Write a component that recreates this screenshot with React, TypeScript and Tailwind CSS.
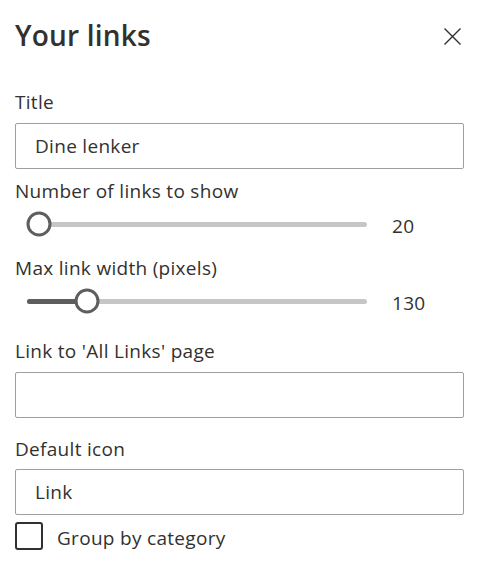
const font = { fontFamily: '"Open Sans", "Noto Sans", sans-serif' };

const Label = ({ children, className = "" }: { children: string; className?: string }) => (
  <div className={`text-[19px] leading-[24px] tracking-[0.3px] text-[#323130] ${className}`}>{children}</div>
);

const TextField = ({ value, className = "" }: { value: string; className?: string }) => (
  <div
    className={`h-[46px] w-[449px] rounded-[2px] border border-[#a19f9d] bg-white pl-[19px] flex items-center text-[19px] tracking-[0.3px] text-[#323130] ${className}`}
  >
    {value}
  </div>
);

const Slider = ({ percent, value, className = "" }: { percent: number; value: string; className?: string }) => (
  <div className={`flex items-center h-[32px] ${className}`}>
    <div className="relative ml-[12px] w-[340px] h-[32px] flex items-center">
      <div className="w-full h-[5px] rounded-full bg-[#c8c6c4]" />
      <div
        className="absolute left-0 h-[5px] rounded-l-full bg-[#605e5c]"
        style={{ width: `${percent}%` }}
      />
      <div
        className="absolute top-1/2 h-[25px] w-[25px] -translate-x-1/2 -translate-y-1/2 rounded-full border-[3px] border-[#605e5c] bg-white"
        style={{ left: `${percent}%` }}
      />
    </div>
    <div className="ml-[25px] pt-[4px] text-[19px] leading-[24px] tracking-[0.3px] text-[#323130]">{value}</div>
  </div>
);

export default function App() {
  return (
    <div className="w-[480px] h-[574px] bg-white px-[15px] pt-[15px]" style={font}>
      <div className="flex items-start justify-between h-[36px]">
        <h1 className="mt-[2px] text-[28px] leading-[36px] font-semibold tracking-[0.2px] text-[#323130]">Your links</h1>
        <svg width="17" height="17" viewBox="0 0 17 17" className="mr-[4px] mt-[13px]">
          <path d="M0.5 0.5 L16.5 16.5 M16.5 0.5 L0.5 16.5" stroke="#323130" strokeWidth="1.4" fill="none" />
        </svg>
      </div>

      <Label className="mt-[39px]">Title</Label>
      <TextField value="Dine lenker" className="mt-[9px]" />

      <Label className="mt-[10px]">Number of links to show</Label>
      <Slider percent={3.5} value="20" className="mt-[5px]" />

      <Label className="mt-[16px]">Max link width (pixels)</Label>
      <Slider percent={17.6} value="130" className="mt-[5px]" />

      <Label className="mt-[22px]">Link to 'All Links' page</Label>
      <TextField value="" className="mt-[9px]" />

      <Label className="mt-[19px]">Default icon</Label>
      <TextField value="Link" className="mt-[8px]" />

      <label className="mt-[7px] flex items-center gap-[14px]">
        <span className="h-[28px] w-[28px] rounded-[3px] border-2 border-[#323130] bg-white" />
        <span className="pt-[4px] text-[19px] leading-[24px] tracking-[0.3px] text-[#323130]">Group by category</span>
      </label>
    </div>
  );
}
